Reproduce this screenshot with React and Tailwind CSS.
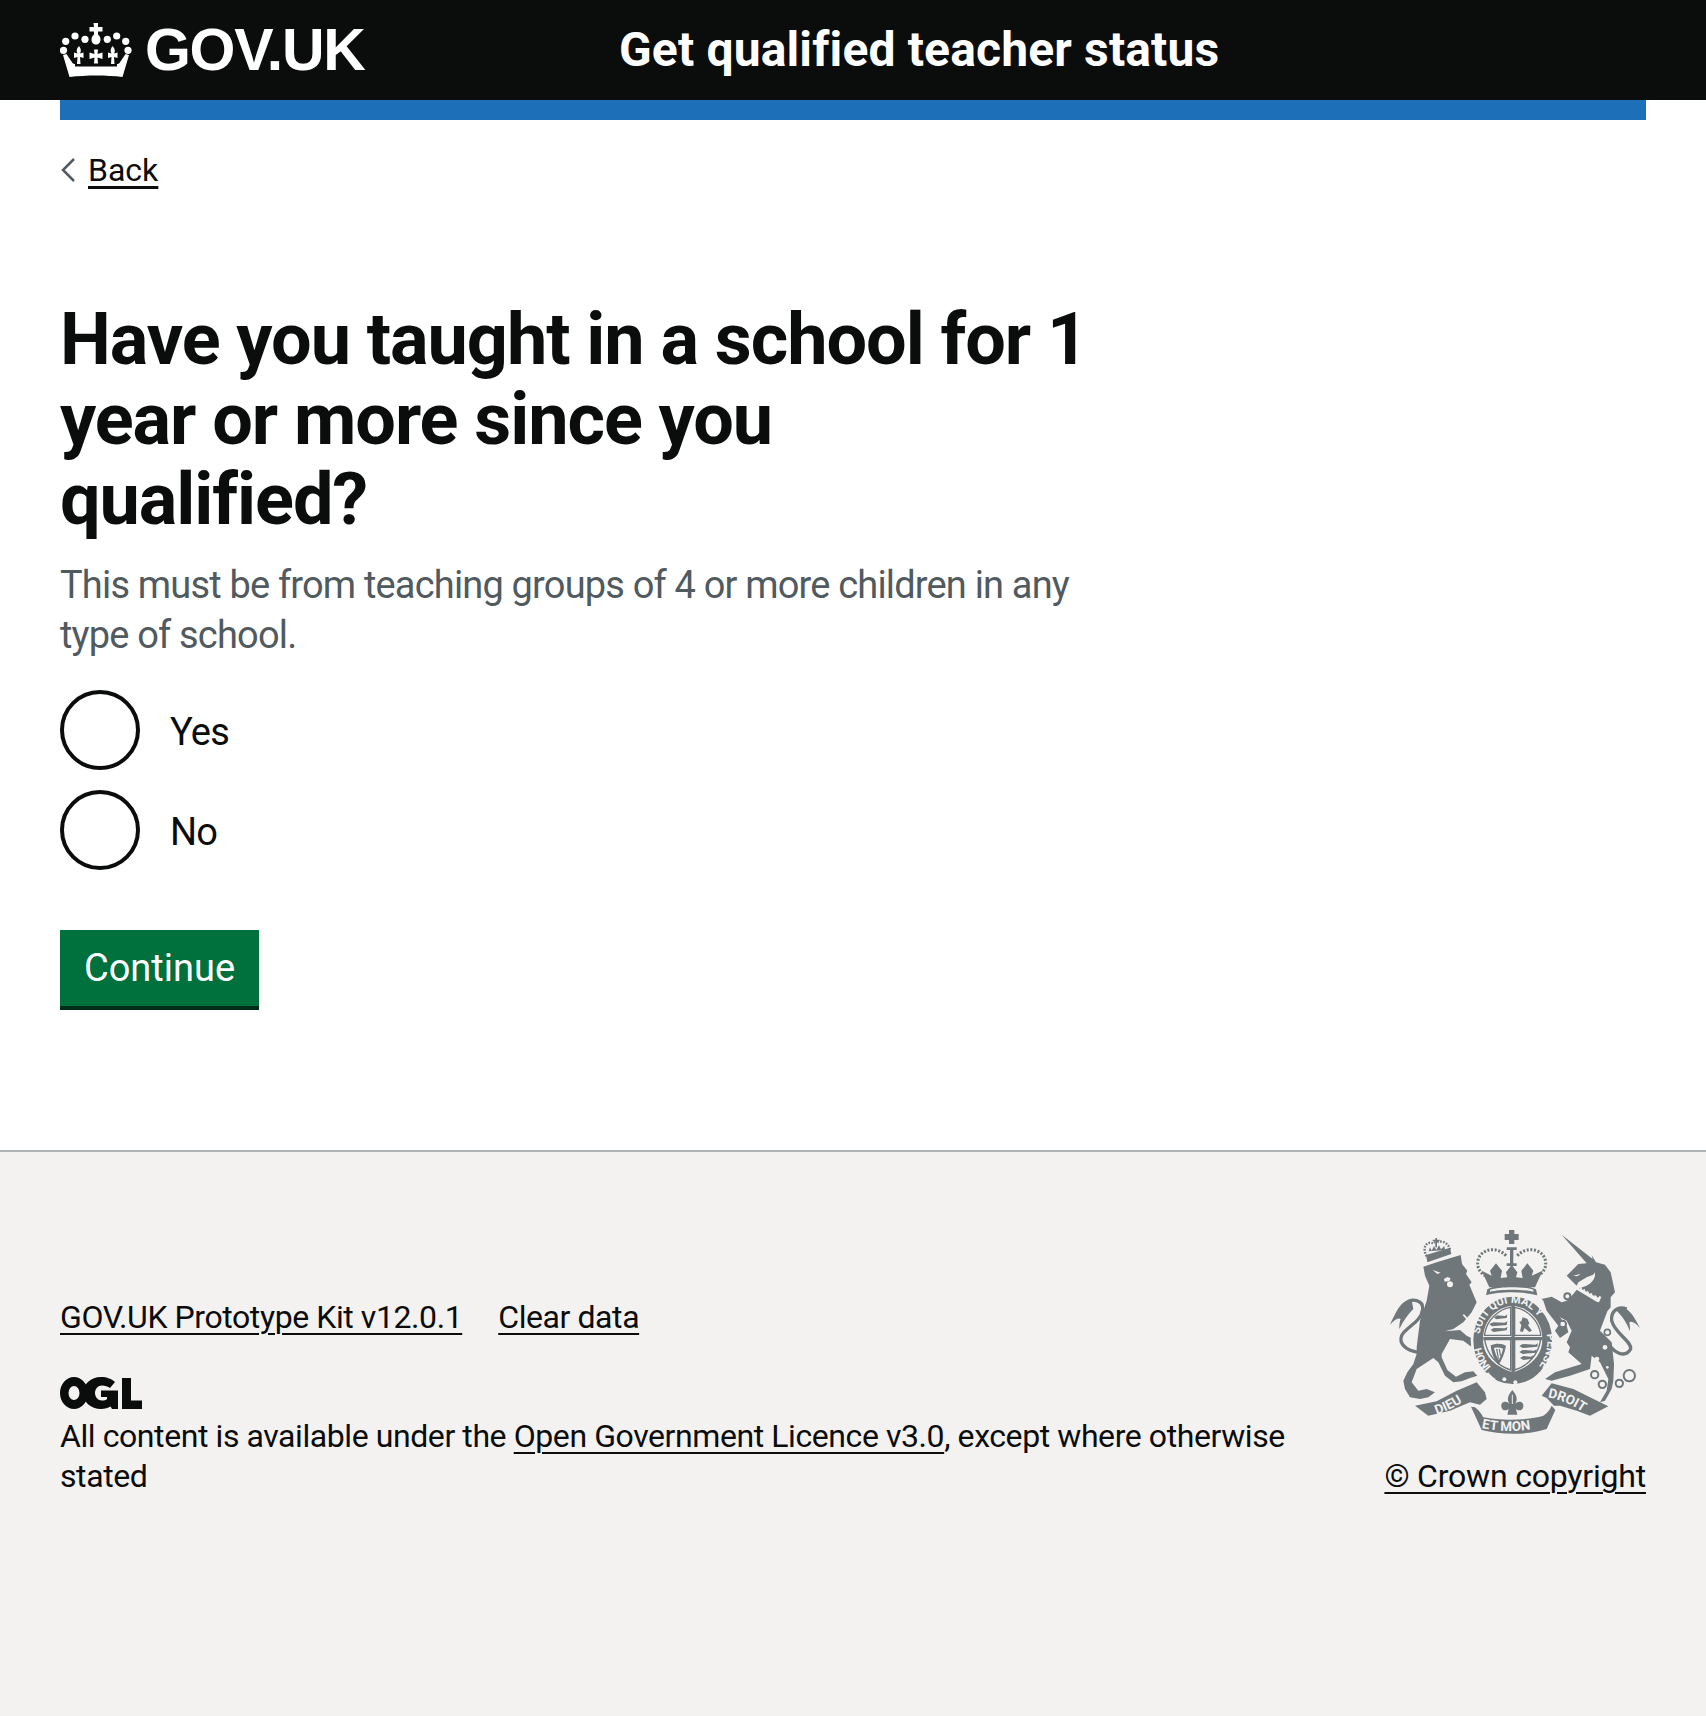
import React from 'react'

const sans = { fontFamily: 'Roboto, sans-serif' }

function Crown() {
  return (
    <svg width="72" height="56" viewBox="0 0 72 56" className="shrink-0" fill="#fff">
      <path d="M33.500 1h4.500v4h4.500v4.500H38v3c2 1.500 2.500 3.500 2.500 5 0 3-2 5-4.500 5s-4.500-2-4.500-5c0-1.500.5-3.500 2.500-5v-3h-4.500V5h4.500z" />
      <circle cx="15" cy="14" r="3.600" />
      <circle cx="25" cy="17.300" r="3.600" />
      <circle cx="47.300" cy="17.300" r="3.600" />
      <circle cx="56.700" cy="14" r="3.600" />
      <circle cx="5.700" cy="19.300" r="3.600" />
      <circle cx="65.700" cy="19.300" r="3.600" />
      <circle cx="3.500" cy="28.300" r="3.600" />
      <circle cx="68" cy="28.300" r="3.600" />
      <path d="M34 27.500h4l-.5 4.500 5-1.500v6.500l-5-1.500.5 6h-4l.5-6-5 1.500v-6.500l5 1.500z" />
      <path d="M19 24c2 2.500 2.500 5 1 7.500l3.500-1v5.500l-3.500-1 .5 7h-3.500l.5-7-3.500 1v-5.500l3.500 1c-1.500-2.500-1-5 1.500-7.500z" />
      <path d="M52.500 24c2.500 2.500 3 5 1.500 7.500l3.500-1v5.500l-3.500-1 .5 7H51l.5-7-3.500 1v-5.500l3.500 1c-1.500-2.500-1-5 1-7.500z" />
      <path d="M3 33l3.500-1 6 9c1 1 2 1 2.500 1v2.500h42V42c.5 0 1.500 0 2.500-1l6-9 3.500 1-6.500 22c-16-2-36-2-53 0z" />
    </svg>
  )
}

// traced by eye from the reference, coordinates are 3x page pixels
function CoatOfArms() {
  const fill = '#6f777b'
  const bg = '#f3f2f1'
  return (
    <svg width="250" height="205" viewBox="60 65 750 615" className="block" fill={fill}>
      <defs>
        <path id="mottoTop" d="M328 399A100 112 0 0 1 528 399" />
        <path id="mottoLeft" d="M309 395A119 132 0 0 0 392 525" />
        <path id="mottoRight" d="M530 380A102 114 0 0 1 486 497" />
        <path id="dieu" d="M200 622C240 608 272 590 305 565" />
        <path id="droit" d="M533 570C580 578 622 600 652 624" />
        <path id="etmon" d="M335 662C390 674 460 674 514 660" />
      </defs>

      {/* lion */}
      <path d="M160 178L200 165L272 143L276 170L292 190L288 200L305 225L298 232L320 285L305 315L280 345L250 365L225 372L270 368L290 385L310 395L330 425L320 425L300 415L280 400L240 395L215 440L215 450L232 488L258 508L285 495L310 492L322 505L300 512L275 522L250 525L225 505L205 465L190 452L140 485L125 525L145 550L170 545L195 555L175 570L150 575L120 570L105 545L100 520L112 495L130 470L140 440L140 420L150 340L170 280L178 235L165 205Z" />
      <path fill="none" stroke={fill} strokeWidth="10" d="M145 435C110 430 85 410 95 385C105 360 155 345 158 305C160 278 125 270 105 290" />
      <path d="M125 278C95 275 80 310 60 352C75 335 85 330 92 335C88 345 88 360 88 365C100 340 115 320 130 305Z" />
      <circle cx="240" cy="231" r="9" fill={bg} />
      <path d="M188 188l24 8-10 4zM222 215l10-6 10 4-4 8-14 2z" fill={bg} />
      {/* lion crown */}
      <path d="M168 143L240 121L244 140L172 165Z" />
      <path fill="none" stroke={fill} strokeWidth="7" strokeDasharray="5 4" d="M170 147C155 120 170 100 190 108C205 98 235 100 240 128" />
      <path d="M188 97h8v-5h5v5h8v5h-8v18h-5v-18h-8z" />
      <path d="M176 132l4-12 5 10 7-14 7 12 8-14 6 12 10-10 2 12z" />

      {/* unicorn */}
      <path d="M575 82L668 155L665 143L678 165L705 172L722 195L735 255L722 270L722 300L712 312L690 370L725 405L732 470L730 520L725 545L705 580L690 585L710 550L715 515L690 465L665 445L660 485L600 505L545 520L525 515L555 495L635 470L595 435L600 420L590 405L605 370L590 340L570 330L590 355L595 375L570 392L555 370L565 355L545 330L530 310L520 280L515 275L545 268L575 285L590 280L610 260L622 245L650 235L675 200L650 210L625 225L620 235L590 205L605 190L625 170L650 168Z" />
      <path fill="none" stroke={fill} strokeWidth="10" d="M712 400C725 435 765 455 782 425C785 400 735 380 725 340C722 310 745 295 770 305" />
      <path d="M750 298C780 300 795 335 810 362C795 345 785 340 778 345C780 355 780 365 780 372C770 345 755 325 740 310Z" />
      <path d="M615 240l6 2 2-6 6 8 6-4 2 8 7-3 3 8 7-2 4 8 7-2 4 8 8-1 6 7 6-5 5 3-7 16-7-2-30-18-30-18-8-6z" fill={bg} />
      <path d="M625 258l76 44" stroke={fill} strokeWidth="5" />
      <path d="M675 195C678 215 662 232 645 236C655 222 668 208 675 195Z" fill={bg} />
      <path d="M610 205l22-6-10 8z" fill={bg} />
      <circle cx="592" cy="267" r="9" fill={bg} stroke={fill} strokeWidth="6" />
      <circle cx="578" cy="350" r="10" fill={bg} stroke={fill} strokeWidth="6" />
      <circle cx="712" cy="375" r="9" fill={bg} stroke={fill} strokeWidth="5" />
      <circle cx="705" cy="420" r="7" fill={bg} />
      <circle cx="681" cy="455" r="7" fill={bg} />
      <circle cx="712" cy="480" r="4" fill={bg} />
      <g fill="none" stroke={fill} strokeWidth="6">
        <circle cx="674" cy="502" r="11" />
        <circle cx="697" cy="531" r="11" />
        <circle cx="748" cy="528" r="11" />
        <circle cx="778" cy="505" r="17" />
      </g>

      {/* crest */}
      <path d="M417 68h16v12h13v18h-13v12h-16V98h-13V80h13zM410 120h30v8h-10v40h10v8h-30v-8h10v-40h-10z" />
      <g fill="none" stroke={fill} strokeWidth="9" strokeDasharray="6 5">
        <path d="M408 145C380 115 335 125 325 155C318 180 330 195 345 205" />
        <path d="M442 145C470 115 515 125 525 155C532 180 520 195 505 205" />
      </g>
      <path d="M335 190L365 205L360 190L378 168L396 190L392 212L412 210L408 195L425 172L442 195L438 210L458 212L454 190L472 168L490 190L485 205L518 190L495 240H358Z" />
      <path d="M352 246C385 228 465 228 498 246L502 264C465 252 385 252 348 264Z" />
      <path d="M360 247C390 237 460 237 490 247L490 253C460 245 390 245 360 253Z" fill={bg} />

      {/* garter and shield */}
      <path d="M280 322L332 380" stroke={bg} strokeWidth="5" />
      <ellipse cx="428" cy="399" rx="122" ry="135" stroke={bg} strokeWidth="8" />
      <path d="M339 395C339 340 380 298 428 296C476 298 517 340 517 395C517 450 475 480 428 495C381 480 339 450 339 395Z" fill={bg} />
      <path d="M344 380C350 340 385 305 422 300V384H344zM434 300C471 305 506 340 512 380V384H434zM344 396H422V488C380 475 350 440 344 396zM434 396H512C506 440 476 475 434 488z" fill="none" stroke={fill} strokeWidth="4" />
      <path d="M424 292h10v97h84v10h-84v99h-10v-99h-84v-10h84z" />
      <g>
        {/* leopards, first and fourth quarter */}
        <path d="M372 330l10-6 22 2 8-4-2 10-32 4zM358 350l12-5 34 1 8-4-2 11-44 4zM362 367l10-5 32 1 8-4-2 10-40 5z" />
        <path d="M448 416l10-6 38 2 8-4-2 10-44 4zM448 434l10-6 34 2 8-4-2 10-40 4zM450 452l10-6 22 2 8-4-4 10-26 4z" />
        {/* lion rampant */}
        <path d="M458 330l14 4 6 14-4 6 12 16-8 4-14-12-6 12-8-2 4-18-6-10 6-2z" />
        {/* harp */}
        <path fillRule="evenodd" d="M362 414c16-8 36-6 46 2-4 22-12 42-22 56-14-14-22-34-24-58zm10 8c2 12 8 26 14 36 6-10 10-22 13-34-8-4-18-4-27-2z" />
        <path d="M378 425l6 30 3-1-5-30zM386 425l4 22 3-2-3-20z" />
      </g>
      <circle cx="403" cy="516" r="6" fill={bg} />
      <circle cx="436" cy="525" r="6" fill={bg} />
      <path d="M355 495c6 8 12 14 22 20l-10 8c-10-6-16-14-20-22z" fill={bg} />
      <g fill={bg} fontFamily="Roboto, sans-serif" fontWeight="700" fontSize="33">
        <text><textPath href="#mottoTop" startOffset="18">SOIT QUI MAL Y</textPath></text>
        <text><textPath href="#mottoLeft" startOffset="30">HONI</textPath></text>
        <text><textPath href="#mottoRight">PENSE</textPath></text>
      </g>

      {/* fleur de lis and scroll */}
      <path d="M427 548C440 565 445 575 435 590C445 578 462 582 460 598C458 610 445 612 438 604L442 622H412L416 604C409 612 396 610 394 598C392 582 409 578 419 590C409 575 414 565 427 548Z" />
      <path d="M427 590v-28" stroke={bg} strokeWidth="3" />
      <path d="M135 595L200 582L260 550L320 525L345 555L350 575L330 592L300 585L282 592L240 610L175 625Z" />
      <path d="M515 565L545 528L610 545L660 570L715 597L660 625L620 610L570 595L552 595L530 572Z" />
      <path d="M303 598L315 600C330 612 335 622 340 630C390 640 470 640 520 625C535 615 540 605 545 595L556 608L530 665C470 685 390 682 335 668Z" />
      <g fill={bg} fontFamily="Roboto, sans-serif" fontWeight="700" fontSize="40">
        <text><textPath href="#dieu">DIEU</textPath></text>
        <text><textPath href="#droit">DROIT</textPath></text>
        <text><textPath href="#etmon">ET MON</textPath></text>
      </g>
    </svg>
  )
}

function RadioOption({ label }) {
  return (
    <label className="flex items-center gap-[30px] h-[80px]">
      <span className="block w-[80px] h-[80px] rounded-full border-[4px] border-[#0b0c0c] bg-white shrink-0" />
      <span className="pt-[3px] text-[38px] leading-[50px] tracking-[-0.82px] text-[#0b0c0c]">{label}</span>
    </label>
  )
}

export default function App() {
  return (
    <div className="min-h-[1716px] flex flex-col bg-white text-[#0b0c0c]" style={sans}>
      <header className="bg-[#0b0c0c] h-[100px] pl-[60px] flex items-center text-white">
        <div className="w-[559px] flex items-center gap-[13px]">
          <Crown />
          <span className="text-[59px] leading-none font-bold tracking-[-1.3px]" style={{ fontFamily: '"Liberation Sans", Arial, sans-serif' }}>
            GOV.UK
          </span>
        </div>
        <span className="text-[48px] leading-none font-bold tracking-[0.15px]">Get qualified teacher status</span>
      </header>
      <div className="mx-[60px] h-[20px] bg-[#1d70b8]" />

      <main className="px-[60px] flex-none">
        <a className="mt-[30px] flex items-center gap-[12px] text-[32px] leading-[40px] text-[#0b0c0c]">
          <svg width="16" height="26" viewBox="0 0 16 26" fill="none" stroke="#505a5f" strokeWidth="2.500">
            <path d="M14 2L3 13l11 11" />
          </svg>
          <span className="underline decoration-[3px] underline-offset-[5px]">Back</span>
        </a>

        <h1 className="mt-[110px] w-[1030px] text-[72px] leading-[80px] font-bold tracking-[-1.05px]">
          Have you taught in a school for 1 year or more since you qualified?
        </h1>
        <p className="mt-[20px] w-[1040px] text-[38px] leading-[50px] tracking-[-0.82px] text-[#505a5f]">
          This must be from teaching groups of 4 or more children in any type of school.
        </p>

        <div className="mt-[30px] flex flex-col gap-[20px]">
          <RadioOption label="Yes" />
          <RadioOption label="No" />
        </div>

        <button className="mt-[60px] block w-[199px] h-[80px] bg-[#00703c] border-b-[4px] border-[#002d18] text-white text-[38px] leading-none">
          Continue
        </button>
      </main>

      <footer className="mt-[140px] flex-1 bg-[#f3f2f1] border-t-2 border-[#b1b4b6] pt-[77px] px-[60px]">
        <div className="flex items-end justify-between">
          <div className="w-[1240px] text-[32px] leading-[40px] tracking-[-0.42px]">
            <div className="flex gap-[36px]">
              <a className="underline decoration-[2px] underline-offset-[5px]">GOV.UK Prototype Kit v12.0.1</a>
              <a className="underline decoration-[2px] underline-offset-[5px]">Clear data</a>
            </div>
            <svg className="mt-[40px] block" width="83" height="32" viewBox="0 0 83 32" fill="#0b0c0c">
              <path fillRule="evenodd" d="M14 0a14 16 0 1 0 0 32 14 16 0 0 0 0-32zm0 9a5.500 7 0 1 1 0 14 5.500 7 0 0 1 0-14z" />
              <path d="M41 0C47 0 52 2 55 5L50 11C48 9.500 45 8.500 42 8.500C38 8.500 35 12 35 16C35 20 38 23.500 42 23.500C44 23.500 46 23 47 22V20H41V13.500H58V32H52L50.500 29.500C48 31 45 32 41 32C31 32 23 25 23 16C23 7 31 0 41 0Z" />
              <path d="M62 1H71V23.500H82V32H62Z" />
            </svg>
            <p className="mt-[7px]">
              All content is available under the{' '}
              <a className="underline decoration-[2px] underline-offset-[5px]">Open Government Licence v3.0</a>, except where otherwise stated
            </p>
          </div>
          <div className="flex flex-col items-end">
            <div className="mr-[6px]">
              <CoatOfArms />
            </div>
            <a className="mt-[22px] text-[32px] leading-[40px] tracking-[-0.2px] underline decoration-[2px] underline-offset-[5px]">© Crown copyright</a>
          </div>
        </div>
      </footer>
    </div>
  )
}
